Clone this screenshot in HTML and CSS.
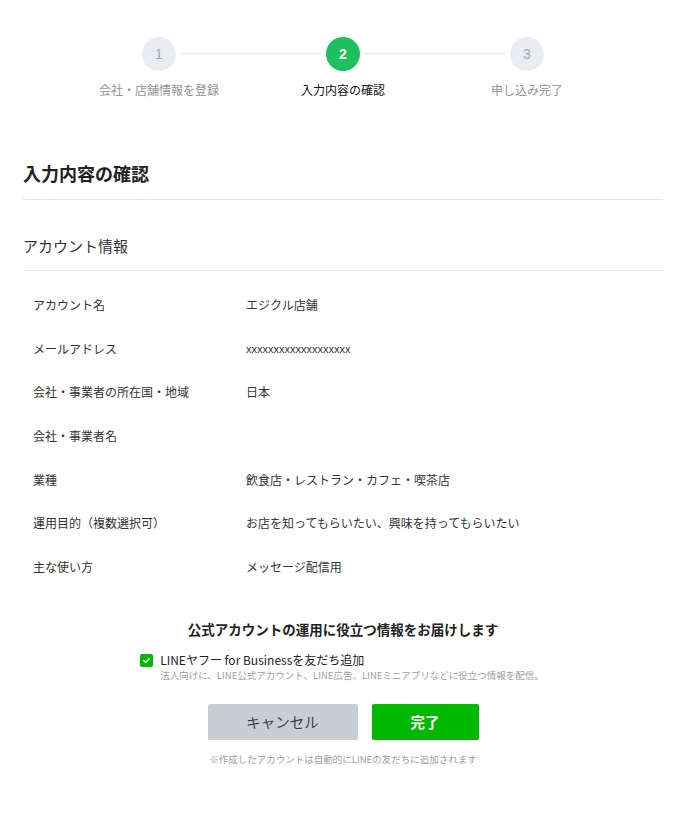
FILE: index.html
```html
<!DOCTYPE html>
<html lang="ja">
<head>
<meta charset="utf-8">
<link rel="stylesheet" href="styles.css">
</head>
<body>
<div class="page">
  <ol class="steps">
    <li class="step">
      <span class="circle">1</span>
      <span class="step-label">会社・店舗情報を登録</span>
    </li>
    <li class="step active">
      <span class="circle">2</span>
      <span class="step-label">入力内容の確認</span>
    </li>
    <li class="step">
      <span class="circle">3</span>
      <span class="step-label">申し込み完了</span>
    </li>
  </ol>

  <h1 class="title">入力内容の確認</h1>
  <h2 class="section">アカウント情報</h2>

  <dl class="info">
    <div class="row"><dt>アカウント名</dt><dd>エジクル店舗</dd></div>
    <div class="row"><dt>メールアドレス</dt><dd class="mono">xxxxxxxxxxxxxxxxxxx</dd></div>
    <div class="row"><dt>会社・事業者の所在国・地域</dt><dd>日本</dd></div>
    <div class="row"><dt>会社・事業者名</dt><dd></dd></div>
    <div class="row"><dt>業種</dt><dd>飲食店・レストラン・カフェ・喫茶店</dd></div>
    <div class="row"><dt>運用目的（複数選択可）</dt><dd>お店を知ってもらいたい、興味を持ってもらいたい</dd></div>
    <div class="row"><dt>主な使い方</dt><dd>メッセージ配信用</dd></div>
  </dl>

  <div class="optin">
    <p class="optin-title">公式アカウントの運用に役立つ情報をお届けします</p>
    <div class="check">
      <span class="box"><svg width="9" height="9" viewBox="0 0 10 10"><path d="M2 5.2 L4.1 7.2 L8 3" fill="none" stroke="#fff" stroke-width="1.8" stroke-linecap="round" stroke-linejoin="round"/></svg></span>
      <div class="check-text">
        <span class="check-label">LINEヤフー for Businessを友だち追加</span>
        <span class="check-note">法人向けに、LINE公式アカウント、LINE広告、LINEミニアプリなどに役立つ情報を配信。</span>
      </div>
    </div>
    <div class="buttons">
      <button class="btn cancel">キャンセル</button>
      <button class="btn done">完了</button>
    </div>
    <p class="footnote">※作成したアカウントは自動的にLINEの友だちに追加されます</p>
  </div>
</div>
</body>
</html>
```
FILE: styles.css
```css
* { box-sizing: border-box; }
body {
  margin: 0;
  background: #fff;
  font-family: "Noto Sans CJK JP", "Noto Sans", sans-serif;
  color: #222;
}
.page {
  width: 640px;
  margin: 0 0 0 23px;
  padding-top: 37px;
}
.steps {
  list-style: none;
  margin: 0 auto;
  padding: 0;
  width: 552px;
  display: flex;
}
.step {
  flex: 1;
  display: flex;
  flex-direction: column;
  align-items: center;
  position: relative;
}
.step + .step::before {
  content: "";
  position: absolute;
  top: 16px;
  left: calc(-50% + 22px);
  right: calc(50% + 22px);
  border-top: 1.5px dotted #d3d6db;
}
.circle {
  width: 34px;
  height: 34px;
  border-radius: 50%;
  background: #e9ecf0;
  color: #a3a8b0;
  font-family: "Liberation Sans", sans-serif;
  font-size: 14px;
  display: flex;
  align-items: center;
  justify-content: center;
}
.step.active .circle {
  background: #1ebf5d;
  color: #fff;
  font-weight: bold;
}
.step-label {
  margin-top: 11px;
  font-size: 12px;
  line-height: 16px;
  color: #8f949b;
}
.step.active .step-label { color: #111; }

.title {
  margin: 62px 0 0;
  font-size: 18px;
  line-height: 26px;
  font-weight: bold;
  color: #222;
  padding-bottom: 13px;
  border-bottom: 1px solid #e3e5e8;
}
.section {
  margin: 0;
  padding: 34px 0 12px;
  font-size: 15px;
  line-height: 24px;
  font-weight: normal;
  color: #333;
  border-bottom: 1px solid #e3e5e8;
}
.info {
  margin: 0;
  padding: 24px 0 0 10px;
}
.row {
  display: flex;
  height: 43.7px;
  font-size: 12px;
  line-height: 20px;
  color: #333;
}
.row dt { width: 213px; }
.row dd { margin: 0; }
.row dd.mono {
  font-family: "Liberation Sans", sans-serif;
  font-size: 11px;
}
.optin {
  display: flex;
  flex-direction: column;
  align-items: center;
  padding-top: 18px;
}
.optin-title {
  margin: 0;
  font-size: 13.5px;
  font-weight: bold;
  line-height: 20px;
  color: #222;
}
.check {
  display: flex;
  align-items: flex-start;
  gap: 7px;
  margin-top: 12px;
  margin-left: -2px;
}
.box {
  width: 13px;
  height: 13px;
  margin-top: 3px;
  background: #00b900;
  border-radius: 2px;
  display: flex;
  align-items: center;
  justify-content: center;
}
.check-text { display: flex; flex-direction: column; }
.check-label {
  font-size: 12px;
  line-height: 18px;
  color: #222;
}
.check-note {
  font-size: 9.5px;
  line-height: 13px;
  color: #9aa0a8;
}
.buttons {
  display: flex;
  gap: 14px;
  margin-top: 22px;
}
.btn {
  height: 36px;
  border: none;
  border-radius: 2px;
  font-family: "Noto Sans CJK JP", sans-serif;
  font-size: 14.5px;
}
.cancel { width: 150px; background: #c8ced6; color: #3b4047; font-weight: 400; }
.done { width: 107px; background: #00b900; color: #fff; font-weight: bold; }
.footnote {
  margin: 13px 0 0;
  font-size: 9.5px;
  line-height: 13px;
  color: #9aa0a8;
}
```
